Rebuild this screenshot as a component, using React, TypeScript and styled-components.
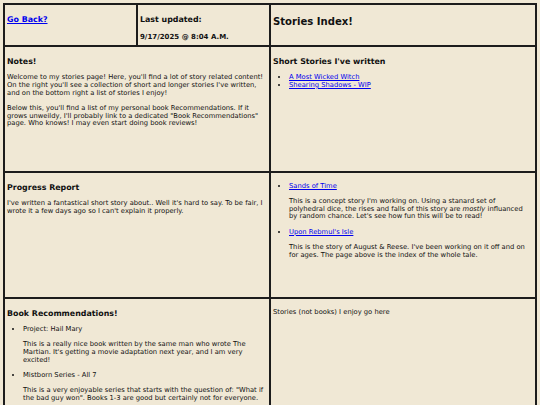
import React from "react";
import styled, { createGlobalStyle } from "styled-components";

const GlobalStyle = createGlobalStyle`
  html, body {
    margin: 0;
    padding: 0;
    background: #f0e8d5;
  }
  body {
    margin: 3px;
    font-family: "DejaVu Sans", Verdana, sans-serif;
    font-size: 6.75px;
    color: #111;
  }
`;

const Board = styled.main`
  display: grid;
  grid-template-columns: repeat(4, 1fr);
  grid-template-rows: 40px 124px 124px 124px;
  gap: 2px;
  padding: 2px;
  background: #1c1c1c;
`;

const Cell = styled.section<{ $span?: number }>`
  grid-column: span ${(p) => p.$span ?? 1};
  background: #f0e8d5;
  padding: 2px;
  min-width: 0;
`;

const Title = styled.h2`
  font-size: 10.1px;
  font-weight: bold;
  margin: 9px 0;
`;

const Heading = styled.h3`
  font-size: 7.9px;
  font-weight: bold;
  margin: 8px 0;
`;

const DateLine = styled.h4`
  font-size: 7px;
  font-weight: bold;
  margin: 8.5px 0;
`;

const Text = styled.p`
  margin: 7.5px 0;
  line-height: 7.8px;
`;

const List = styled.ul`
  margin: 7.5px 0;
  padding-left: 16px;
  list-style: disc;
`;

const Item = styled.li`
  line-height: 7.8px;
`;

const Link = styled.a`
  color: #0000ee;
  text-decoration: underline;
`;

export default function App() {
  return (
    <>
      <GlobalStyle />
      <Board>
        <Cell>
          <Heading>
            <Link href="#">Go Back?</Link>
          </Heading>
        </Cell>
        <Cell>
          <Heading>Last updated:</Heading>
          <DateLine>9/17/2025 @ 8:04 A.M.</DateLine>
        </Cell>
        <Cell $span={2}>
          <Title>Stories Index!</Title>
        </Cell>

        <Cell $span={2}>
          <Heading>Notes!</Heading>
          <Text>
            Welcome to my stories page! Here, you'll find a lot of story related content! On the
            right you'll see a collection of short and longer stories I've written, and on the
            bottom right a list of stories I enjoy!
          </Text>
          <Text>
            Below this, you'll find a list of my personal book Recommendations. If it grows
            unweildy, I'll probably link to a dedicated "Book Recommendations" page. Who knows! I
            may even start doing book reviews!
          </Text>
        </Cell>
        <Cell $span={2}>
          <Heading>Short Stories I've written</Heading>
          <List>
            <Item>
              <Link href="#">A Most Wicked Witch</Link>
            </Item>
            <Item>
              <Link href="#">Shearing Shadows - WIP</Link>
            </Item>
          </List>
        </Cell>

        <Cell $span={2}>
          <Heading>Progress Report</Heading>
          <Text>
            I've written a fantastical short story about.. Well it's hard to say. To be fair, I
            wrote it a few days ago so I can't explain it properly.
          </Text>
        </Cell>
        <Cell $span={2}>
          <List>
            <Item>
              <Link href="#">Sands of Time</Link>
              <Text>
                This is a concept story I'm working on. Using a stanard set of polyhedral dice, the
                rises and falls of this story are <em>mostly</em> influanced by random chance.
                Let's see how fun this will be to read!
              </Text>
            </Item>
            <Item>
              <Link href="#">Upon Rebmul's Isle</Link>
              <Text>
                This is the story of August &amp; Reese. I've been working on it off and on for
                ages. The page above is the index of the whole tale.
              </Text>
            </Item>
          </List>
        </Cell>

        <Cell $span={2}>
          <Heading>Book Recommendations!</Heading>
          <List>
            <Item>
              Project: Hail Mary
              <Text>
                This is a really nice book written by the same man who wrote The Martian. It's
                getting a movie adaptation next year, and I am very excited!
              </Text>
            </Item>
            <Item>
              Mistborn Series - All 7
              <Text>
                This is a very enjoyable series that starts with the question of: "What if the bad
                guy won". Books 1-3 are good but certainly not for everyone.
              </Text>
            </Item>
          </List>
        </Cell>
        <Cell $span={2}>
          <Text>Stories (not books) I enjoy go here</Text>
        </Cell>
      </Board>
    </>
  );
}
